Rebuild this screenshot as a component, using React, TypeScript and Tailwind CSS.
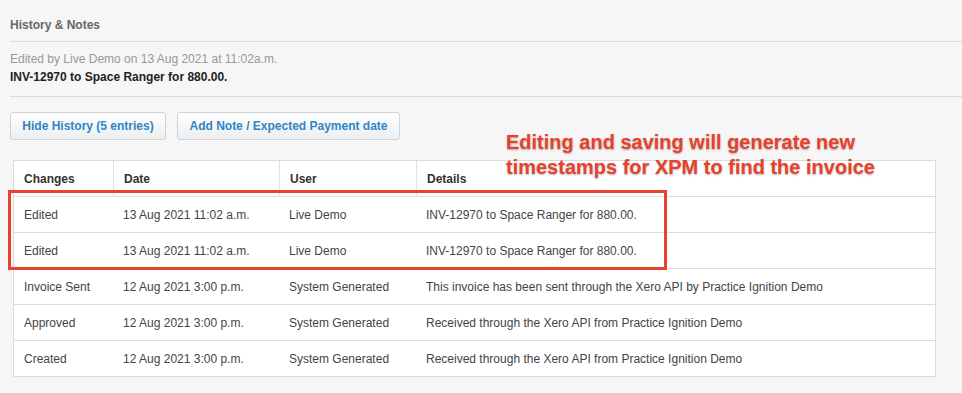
import React from 'react'

type Entry = { change: string; date: string; user: string; details: string }

const entries: Entry[] = [
  { change: 'Edited', date: '13 Aug 2021 11:02 a.m.', user: 'Live Demo', details: 'INV-12970 to Space Ranger for 880.00.' },
  { change: 'Edited', date: '13 Aug 2021 11:02 a.m.', user: 'Live Demo', details: 'INV-12970 to Space Ranger for 880.00.' },
  {
    change: 'Invoice Sent',
    date: '12 Aug 2021 3:00 p.m.',
    user: 'System Generated',
    details: 'This invoice has been sent through the Xero API by Practice Ignition Demo',
  },
  {
    change: 'Approved',
    date: '12 Aug 2021 3:00 p.m.',
    user: 'System Generated',
    details: 'Received through the Xero API from Practice Ignition Demo',
  },
  {
    change: 'Created',
    date: '12 Aug 2021 3:00 p.m.',
    user: 'System Generated',
    details: 'Received through the Xero API from Practice Ignition Demo',
  },
]

const cols = ['w-[99px]', 'w-[166px]', 'w-[137px]', 'flex-1']

function Button({ label, width }: { label: string; width: string }) {
  return (
    <button
      className={`${width} h-[28px] rounded-[3px] border border-[#cfd3d6] bg-gradient-to-b from-white to-[#eceef0] text-[12px] font-bold text-[#2f86c6]`}
    >
      {label}
    </button>
  )
}

export default function App() {
  return (
    <div className="relative w-[962px] h-[393px] overflow-hidden bg-[#f6f6f6] font-['Liberation_Sans',Arial,sans-serif]">
      <div className="pl-[10px]">
        {/* Section title */}
        <div className="h-[42px] pt-[17px] border-b border-[#dcdcdc] text-[12px] leading-[16px] font-bold text-[#666]">
          History &amp; Notes
        </div>

        {/* Latest note */}
        <div className="pt-[8px] pb-[10px] border-b border-[#dcdcdc] text-[12px] leading-[18px]">
          <p className="text-[#999]">Edited by Live Demo on 13 Aug 2021 at 11:02a.m.</p>
          <p className="font-bold text-[#222]">INV-12970 to Space Ranger for 880.00.</p>
        </div>

        {/* Actions */}
        <div className="mt-[15px] flex gap-[11px]">
          <Button label="Hide History (5 entries)" width="w-[156px]" />
          <Button label="Add Note / Expected Payment date" width="w-[223px]" />
        </div>

        {/* History table */}
        <div className="mt-[20px] ml-[3px] w-[923px] border border-[#dcdcdc] bg-white text-[12px]">
          <div className="flex h-[35px] items-center font-bold text-[#333]">
            {['Changes', 'Date', 'User', 'Details'].map((h, i) => (
              <div
                key={h}
                className={`${cols[i]} h-full flex items-center px-[10px] ${i > 0 ? 'border-l border-[#e2e2e2]' : ''}`}
              >
                {h}
              </div>
            ))}
          </div>
          {entries.map((e, idx) => (
            <div key={idx} className="flex h-[36px] items-center border-t border-[#dcdcdc] text-[#444]">
              <div className={`${cols[0]} px-[10px]`}>{e.change}</div>
              <div className={`${cols[1]} px-[10px]`}>{e.date}</div>
              <div className={`${cols[2]} px-[10px]`}>{e.user}</div>
              <div className={`${cols[3]} px-[10px]`}>{e.details}</div>
            </div>
          ))}
        </div>
      </div>

      {/* Annotation overlay */}
      <div className="absolute left-[8px] top-[190px] w-[659px] h-[80px] border-[3px] border-[#e8412c]" />
      <div className="absolute left-[506px] top-[130px] text-[20px] leading-[25px] font-bold text-[#e8412c] [text-shadow:0_1px_2px_rgba(0,0,0,0.3)]">
        <p>Editing and saving will generate new</p>
        <p>timestamps for XPM to find the invoice</p>
      </div>
    </div>
  )
}
